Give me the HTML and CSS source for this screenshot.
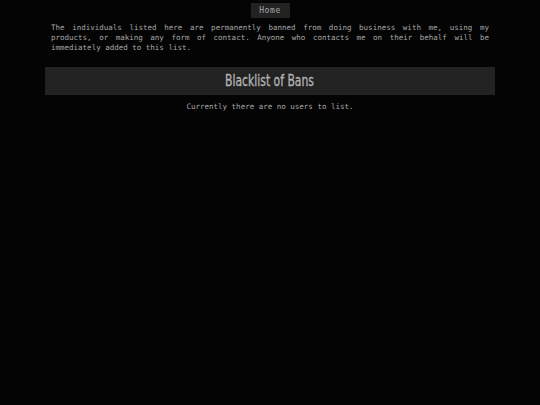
FILE: index.html
```html
<!DOCTYPE html>
<html>
<head>
<meta charset="utf-8">
<link rel="stylesheet" href="styles.css">
</head>
<body>
<nav class="nav"><a class="nav-btn" href="#">Home</a></nav>
<p class="intro">The individuals listed here are permanently banned from doing business with me, using my products, or making any form of contact. Anyone who contacts me on their behalf will be immediately added to this list.</p>
<section class="panel">
  <h1 class="panel-title">Blacklist of Bans</h1>
</section>
<p class="empty">Currently there are no users to list.</p>
</body>
</html>
```

FILE: styles.css
```css
html, body {
  margin: 0;
  padding: 0;
  background: #040404;
  height: 100%;
}
body {
  font-family: "DejaVu Sans Mono", "Liberation Mono", monospace;
  font-size: 7.5px;
  color: #a8a8a8;
  padding: 0 45px;
}
.nav {
  display: flex;
  justify-content: center;
  padding-top: 3px;
}
.nav-btn {
  display: block;
  background: #222;
  color: #a8a8a8;
  text-decoration: none;
  font-size: 8px;
  letter-spacing: 0.6px;
  width: 39px;
  height: 15px;
  line-height: 15px;
  text-align: center;
}
.intro {
  margin: 5px 6px 0;
  text-align: justify;
  line-height: 10px;
}
.panel {
  margin-top: 14px;
  background: #222;
  height: 28px;
  display: flex;
  align-items: center;
  justify-content: center;
}
.panel-title {
  margin: 0;
  font-family: "DejaVu Sans Condensed", "Liberation Sans", sans-serif;
  font-weight: normal;
  font-size: 15px;
  color: #b4b4b4;
  transform: scaleX(0.8);
  -webkit-text-stroke: 0.3px #b4b4b4;
}
.empty {
  margin: 7px 0 0;
  text-align: center;
  line-height: 10px;
}
```
